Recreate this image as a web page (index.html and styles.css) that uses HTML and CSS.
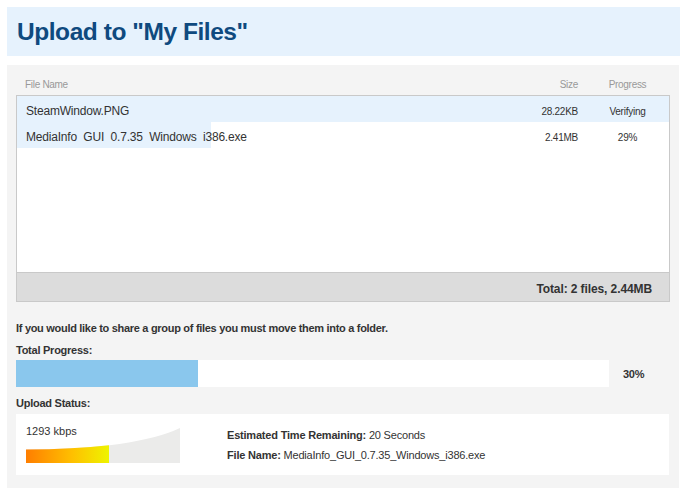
FILE: index.html
```
<!DOCTYPE html>
<html>
<head>
<meta charset="utf-8">
<link rel="stylesheet" href="styles.css">
</head>
<body>
<div class="page">
  <div class="header"><h1 class="title">Upload to "My Files"</h1></div>
  <div class="panel">
    <div class="cols">
      <div class="c-name">File Name</div>
      <div class="c-size">Size</div>
      <div class="c-prog">Progress</div>
    </div>
    <div class="list">
      <div class="rows">
        <div class="row" style="--p:100%">
          <div class="c-name"><span class="fname">SteamWindow.PNG</span></div>
          <div class="c-size">28.22KB</div>
          <div class="c-prog">Verifying</div>
        </div>
        <div class="row" style="--p:29.8%">
          <div class="c-name"><span class="fname">MediaInfo_GUI_0.7.35_Windows_i386.exe</span></div>
          <div class="c-size">2.41MB</div>
          <div class="c-prog">29%</div>
        </div>
      </div>
      <div class="total">Total: 2 files, 2.44MB</div>
    </div>
    <p class="msg">If you would like to share a group of files you must move them into a folder.</p>
    <div class="label">Total Progress:</div>
    <div class="progress">
      <div class="bar"><div class="fill" style="width:30.7%"></div></div>
      <div class="pct">30%</div>
    </div>
    <div class="label status-label">Upload Status:</div>
    <div class="status">
      <div class="gauge">
        <div class="kbps">1293 kbps</div>
        <svg class="meter" width="154" height="35" viewBox="0 0 154 35">
          <defs>
            <linearGradient id="g" gradientUnits="userSpaceOnUse" x1="0" y1="0" x2="83" y2="0">
              <stop offset="0" stop-color="#ff7e00"/>
              <stop offset="0.55" stop-color="#ffbf00"/>
              <stop offset="1" stop-color="#eef400"/>
            </linearGradient>
            <clipPath id="cl"><rect x="0" y="0" width="83" height="35"/></clipPath>
          </defs>
          <path d="M0,35 L0,21.5 Q110,21 154,0 L154,35 Z" fill="#ebebea"/>
          <path d="M0,35 L0,21.5 Q110,21 154,0 L154,35 Z" fill="url(#g)" clip-path="url(#cl)"/>
        </svg>
      </div>
      <div class="info">
        <div><b>Estimated Time Remaining:</b> 20 Seconds</div>
        <div><b>File Name:</b> MediaInfo_GUI_0.7.35_Windows_i386.exe</div>
      </div>
    </div>
  </div>
</div>
</body>
</html>
```
FILE: styles.css
```
* { box-sizing: border-box; }
html, body { margin: 0; padding: 0; background: #fff; }
body {
  font-family: "Liberation Sans", Arial, sans-serif;
  color: #333;
  font-size: 11px;
  letter-spacing: -0.25px;
}
.page { padding: 7px 0 0 7px; width: 680px; }
.header {
  height: 49px;
  background: #e6f2fd;
  padding-left: 10px;
}
.title {
  margin: 0;
  font-size: 24.5px;
  line-height: 49px;
  font-weight: bold;
  color: #0f4a7f;
  letter-spacing: -0.45px;
}
.panel {
  margin-top: 9px;
  width: 672px;
  background: #f4f4f4;
  padding: 9px 9px 13px 9px;
}
.cols, .row {
  display: grid;
  grid-template-columns: 1fr 100px 83px;
}
.cols {
  height: 21px;
  line-height: 21px;
  font-size: 10px;
  color: #999;
  letter-spacing: -0.3px;
  padding-right: 1px;
}
.cols .c-name { padding-left: 9px; }
.c-size { text-align: right; padding-right: 8px; }
.c-prog { text-align: center; }
.list {
  height: 207px;
  border: 1px solid #c9c9c9;
  background: #fff;
  display: flex;
  flex-direction: column;
}
.rows { flex: 1; }
.row {
  height: 26px;
  padding-top: 8px;
  background: linear-gradient(to right, #e6f2fd var(--p), #fff var(--p));
  font-size: 10px;
  line-height: 14px;
}
.row .c-name { padding-left: 9px; font-size: 12px; letter-spacing: -0.2px; }
.row .c-size, .row .c-prog { padding-top: 1px; }
.fname {
  display: block;
  height: 12px;
  overflow: hidden;
  line-height: 14px;
  white-space: nowrap;
}
.total {
  height: 29px;
  border-top: 1px solid #c9c9c9;
  background: #dcdcdc;
  padding: 4px 17px 0 0;
  line-height: 24px;
  text-align: right;
  font-weight: bold;
  font-size: 12px;
  letter-spacing: -0.1px;
}
.msg {
  margin: 18px 0 0 0;
  line-height: 16px;
  font-weight: bold;
  letter-spacing: -0.3px;
}
.label {
  margin-top: 6px;
  line-height: 16px;
  font-weight: bold;
}
.progress {
  display: flex;
  align-items: center;
  margin-top: 2px;
}
.bar {
  width: 593px;
  height: 27px;
  background: #fff;
}
.fill { height: 100%; background: #8ac7ed; }
.pct { margin-left: 14px; font-weight: bold; }
.status-label { margin-top: 8px; }
.status {
  margin-top: 3px;
  width: 653px;
  background: #fff;
  padding: 8px 10px 10px 10px;
  display: flex;
}
.gauge {
  display: grid;
  width: 154px;
  height: 41px;
}
.kbps, .meter { grid-area: 1 / 1; }
.kbps { line-height: 16px; align-self: start; letter-spacing: 0; padding-top: 1px; }
.meter { align-self: end; display: block; }
.info {
  margin-left: 47px;
  padding-top: 3px;
  line-height: 20px;
  letter-spacing: -0.2px;
}
.info b { font-weight: bold; }
```
